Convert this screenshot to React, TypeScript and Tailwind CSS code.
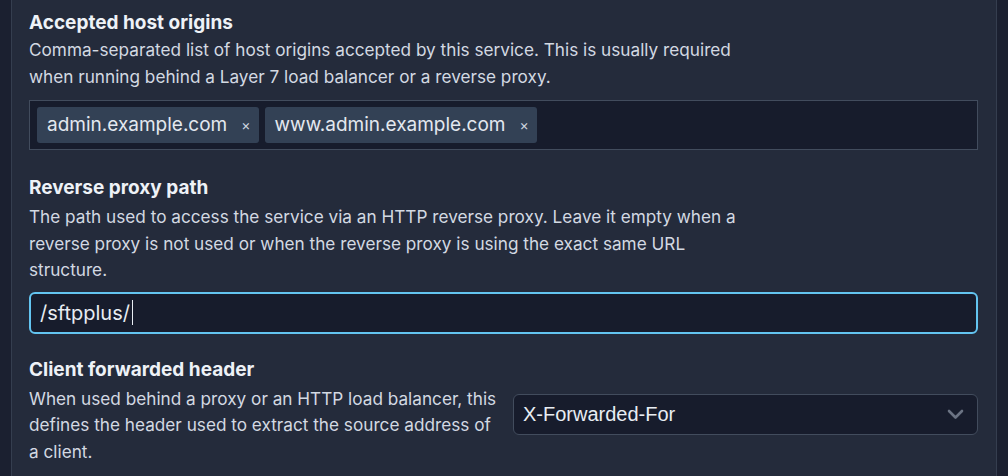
import React from 'react'

const tags = ['admin.example.com', 'www.admin.example.com']

function Heading({ children }: { children: React.ReactNode }) {
  return <h3 className="text-[19px] font-bold leading-[28px] text-[#eef2f7]">{children}</h3>
}

function Help({ children, className = '' }: { children: React.ReactNode; className?: string }) {
  return <p className={`text-[17.2px] leading-[26.5px] text-[#d3d9e2] ${className}`}>{children}</p>
}

export default function App() {
  return (
    <div className="flex h-[476px] overflow-hidden bg-[#1b2030] font-['Inter','Noto_Sans',sans-serif]">
      <div className="ml-[11px] w-[986px] shrink-0 border-x border-[#353e4f] bg-[#242b3b] pl-[17px] pr-[18px] pt-[9px]">
        {/* Accepted host origins */}
        <Heading>Accepted host origins</Heading>
        <Help className="max-w-[728px]">
          Comma-separated list of host origins accepted by this service. This is usually required
          when running behind a Layer 7 load balancer or a reverse proxy.
        </Help>
        <div className="mt-[10px] flex h-[50px] items-start gap-[6px] border border-[#424c5d] bg-[#171c2c] px-[7px] pt-[6px]">
          {tags.map((t) => (
            <span
              key={t}
              className="flex h-[36px] items-center rounded-[3px] bg-[#334155] pl-[10px] pr-[8px] text-[19px] text-[#e3e8ef]"
            >
              {t}
              <span className="ml-[14px] text-[14px] leading-none text-[#cfd6e0]">×</span>
            </span>
          ))}
        </div>

        {/* Reverse proxy path */}
        <div className="mt-[24px]">
          <Heading>Reverse proxy path</Heading>
          <Help className="mt-[2px] max-w-[728px]">
            The path used to access the service via an HTTP reverse proxy. Leave it empty when a
            reverse proxy is not used or when the reverse proxy is using the exact same URL
            structure.
          </Help>
          <div className="mt-2 flex h-[42px] items-center rounded-[6px] border-2 border-[#63c4f0] bg-[#171c2c] pl-[9px] text-[20px] text-[#e8edf3]">
            /sftpplus/
            <span className="ml-[2px] h-[25px] w-px bg-[#e8edf3]" />
          </div>
        </div>

        {/* Client forwarded header */}
        <div className="mt-[22px]">
          <Heading>Client forwarded header</Heading>
          <div className="mt-[2px] flex items-start">
            <Help className="w-[471px] shrink-0">
              When used behind a proxy or an HTTP load balancer, this defines the header used to
              extract the source address of a client.
            </Help>
            <div className="ml-[13px] mt-2 flex h-[41px] flex-1 items-center justify-between rounded-[6px] border border-[#424c5d] bg-[#171c2c] pl-[9px] pr-[13px] font-['Liberation_Sans',Arial,sans-serif] text-[20px] text-[#e8edf3]">
              X-Forwarded-For
              <svg width="17" height="11" viewBox="0 0 17 11" fill="none">
                <path d="M2 2l6.5 6.5L15 2" stroke="#6b7383" strokeWidth="2.6" strokeLinecap="round" strokeLinejoin="round" />
              </svg>
            </div>
          </div>
        </div>
      </div>
    </div>
  )
}
